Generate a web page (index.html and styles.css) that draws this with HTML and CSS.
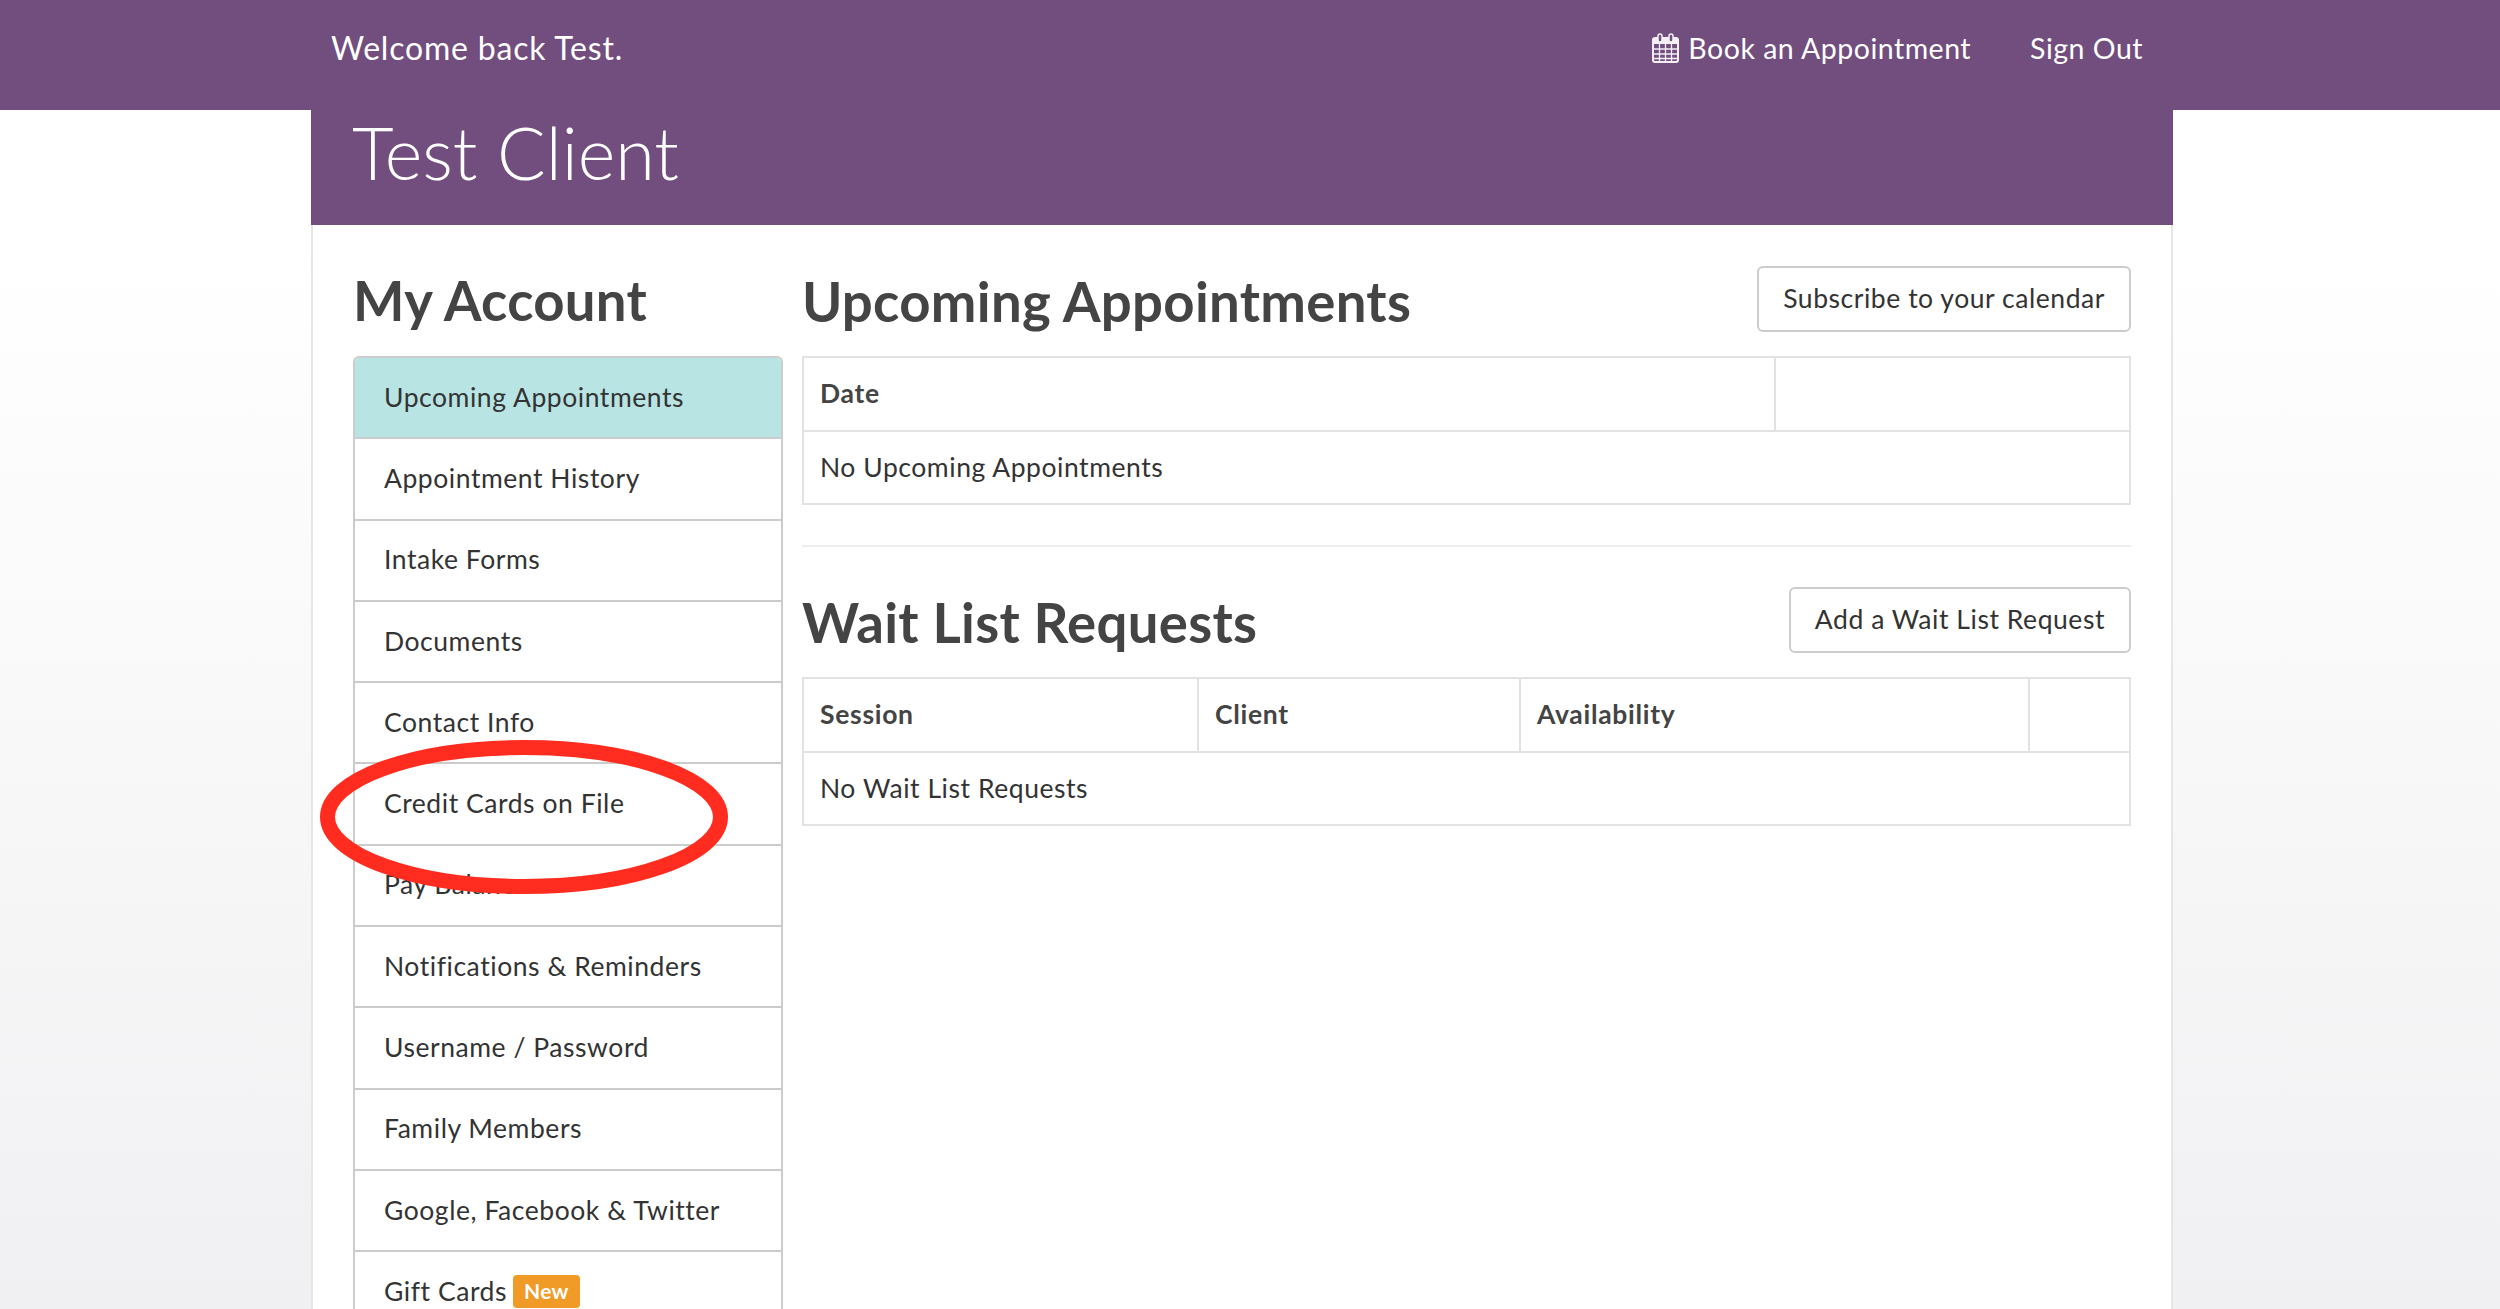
FILE: index.html
```html
<!DOCTYPE html>
<html lang="en">
<head>
<meta charset="utf-8">
<title>My Account</title>
<link rel="stylesheet" href="styles.css">
</head>
<body>
<header class="topbar">
  <div class="topbar-inner">
    <span class="welcome">Welcome back Test.</span>
    <nav class="topnav">
      <a class="toplink" href="#">
        <svg class="cal-icon" viewBox="0 0 27 30" aria-hidden="true">
          <rect x="1" y="5" width="25" height="24" rx="2" fill="none" stroke="#f4f0f5" stroke-width="2"/>
          <rect x="1" y="5" width="25" height="6" fill="#f4f0f5"/>
          <rect x="6" y="1" width="4" height="8" rx="2" fill="#724e7e" stroke="#f4f0f5" stroke-width="1.500"/>
          <rect x="17" y="1" width="4" height="8" rx="2" fill="#724e7e" stroke="#f4f0f5" stroke-width="1.500"/>
          <path d="M7.500 11v17M13.500 11v17M19.500 11v17M1 16h25M1 21h25M1 25.500h25" fill="none" stroke="#f4f0f5" stroke-width="1.300"/>
        </svg>
        <span>Book an Appointment</span>
      </a>
      <a class="toplink" href="#">Sign Out</a>
    </nav>
  </div>
</header>
<div class="page">
  <div class="title-band"><h1 class="client-name">Test Client</h1></div>
  <div class="content">
    <aside class="sidebar">
      <h2 class="heading sidebar-heading">My Account</h2>
      <ul class="menu">
        <li class="menu-item active">Upcoming Appointments</li>
        <li class="menu-item">Appointment History</li>
        <li class="menu-item">Intake Forms</li>
        <li class="menu-item">Documents</li>
        <li class="menu-item">Contact Info</li>
        <li class="menu-item">Credit Cards on File</li>
        <li class="menu-item">Pay Balance</li>
        <li class="menu-item">Notifications &amp; Reminders</li>
        <li class="menu-item">Username / Password</li>
        <li class="menu-item">Family Members</li>
        <li class="menu-item">Google, Facebook &amp; Twitter</li>
        <li class="menu-item">Gift Cards <span class="badge">New</span></li>
      </ul>
      <svg class="circle-mark" viewBox="0 0 408 154" aria-hidden="true">
        <ellipse cx="204" cy="77" rx="196.500" ry="69.500" fill="none" stroke="#ff2c1f" stroke-width="15"/>
      </svg>
    </aside>
    <main class="main">
      <section class="section-upcoming">
        <div class="section-head">
          <h2 class="heading">Upcoming Appointments</h2>
          <a class="btn" href="#">Subscribe to your calendar</a>
        </div>
        <table class="data-table">
          <colgroup><col class="col-date"><col></colgroup>
          <thead><tr><th>Date</th><th></th></tr></thead>
          <tbody><tr><td colspan="2">No Upcoming Appointments</td></tr></tbody>
        </table>
      </section>
      <hr class="divider">
      <section>
        <div class="section-head">
          <h2 class="heading">Wait List Requests</h2>
          <a class="btn" href="#">Add a Wait List Request</a>
        </div>
        <table class="data-table">
          <colgroup><col class="col-session"><col class="col-client"><col class="col-avail"><col></colgroup>
          <thead><tr><th>Session</th><th>Client</th><th>Availability</th><th></th></tr></thead>
          <tbody><tr><td colspan="4">No Wait List Requests</td></tr></tbody>
        </table>
      </section>
    </main>
  </div>
</div>
</body>
</html>
```
FILE: styles.css
```css
* { box-sizing: border-box; }
html, body { height: 1309px; }
body {
  margin: 0;
  overflow: hidden;
  font-family: "Lato", "Liberation Sans", sans-serif;
  font-size: 26.500px;
  letter-spacing: 0.550px;
  color: #333;
  background: linear-gradient(to bottom, #fff 0, #fff 250px, #f0f0f2 1309px);
}
a { color: inherit; text-decoration: none; }

.topbar { height: 110px; background: #724e7e; color: #fff; }
.topbar-inner {
  width: 1862px;
  margin-left: 311px;
  padding: 0 30px 14px 20px;
  height: 100%;
  display: flex;
  align-items: center;
  justify-content: space-between;
}
.welcome { font-size: 32px; letter-spacing: 0.800px; margin-bottom: 2px; }
.topnav { display: flex; align-items: center; gap: 59px; font-size: 28.500px; letter-spacing: 0.500px; }
.toplink { display: flex; align-items: center; gap: 9px; }
.cal-icon { width: 27px; height: 30px; }

.page {
  width: 1862px;
  margin-left: 311px;
  height: 1199px;
  background: #fff;
  border-left: 2px solid #e6e6e6;
  border-right: 2px solid #e6e6e6;
}
.title-band {
  height: 115px;
  margin: 0 -2px;
  padding-left: 41px;
  background: #724e7e;
  color: #fff;
}
.client-name {
  margin: 0;
  font-size: 72px;
  font-weight: 300;
  letter-spacing: 0;
  line-height: 84px;
}
.content {
  display: flex;
  gap: 19px;
  padding: 41px 40px 0;
}
.sidebar { width: 430px; flex: none; position: relative; }
.main { flex: 1; min-width: 0; }

.heading {
  margin: 0;
  padding-top: 2px;
  font-size: 54.500px;
  letter-spacing: 0.300px;
  font-weight: 700;
  color: #444;
  line-height: 66px;
}
.sidebar-heading { height: 90px; padding-top: 1px; }

.menu {
  list-style: none;
  margin: 0;
  padding: 0;
  border: 2px solid #ccc;
  border-radius: 6px;
  overflow: hidden;
}
.menu-item {
  height: 81.300px;
  padding: 0 29px 2px;
  display: flex;
  align-items: center;
  gap: 6px;
  color: #333;
  border-bottom: 2px solid #ccc;
  background: #fff;
}
.menu-item.active { background: #b8e5e4; }
.badge {
  background: #f09a28;
  color: #fff;
  font-size: 21px;
  font-weight: 700;
  letter-spacing: 0.300px;
  padding: 3px 11px 5px;
  margin-top: 2px;
  border-radius: 4px;
}
.circle-mark {
  position: absolute;
  left: -33px;
  top: 474px;
  width: 408px;
  height: 154px;
}

.section-head {
  display: flex;
  align-items: flex-start;
  justify-content: space-between;
  height: 90px;
}
.btn {
  display: block;
  height: 66px;
  line-height: 60px;
  padding: 0 24px;
  border: 2px solid #ccc;
  border-radius: 6px;
  background: #fff;
  color: #333;
}
.data-table {
  width: 100%;
  border-collapse: collapse;
  table-layout: fixed;
  border: 2px solid #e2e2e2;
}
.data-table th, .data-table td {
  height: 73.500px;
  padding: 0 16px 1px;
  text-align: left;
  border: 2px solid #e2e2e2;
  font-size: 26.500px;
}
.data-table th { font-weight: 700; color: #444; letter-spacing: 0.700px; }
.col-date { width: 972px; }
.col-session { width: 395px; }
.col-client { width: 322px; }
.col-avail { width: 509px; }
.divider {
  margin: 40px 0 40px;
  border: 0;
  border-top: 2px solid #eee;
}
```
